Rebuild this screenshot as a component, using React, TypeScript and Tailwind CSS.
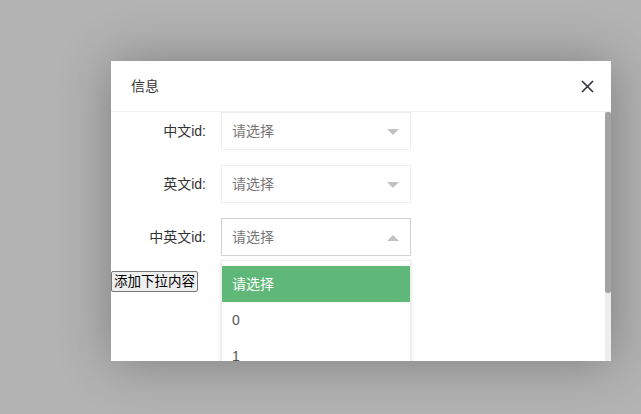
import React from "react";

const FONT = {
  fontFamily: '"Helvetica Neue", Helvetica, "Liberation Sans", "Noto Sans CJK SC", sans-serif',
};

function Caret({ up }: { up?: boolean }) {
  return (
    <svg width="12" height="6" viewBox="0 0 12 6" className="absolute right-[11px] top-[16px]">
      {up ? <polygon points="0,6 12,6 6,0" fill="#c2c2c2" /> : <polygon points="0,0 12,0 6,6" fill="#c2c2c2" />}
    </svg>
  );
}

function SelectRow({
  label,
  open,
  options,
}: {
  label: string;
  open?: boolean;
  options?: string[];
}) {
  return (
    <div className="flex mb-[15px]">
      <label className="w-[110px] pr-[15px] text-right leading-[38px] text-[14px] text-[#333]">
        {label}
      </label>
      <div className="relative w-[190px]">
        <div
          className={`relative h-[38px] border bg-white pl-[10px] leading-[36px] text-[14px] text-[#777] ${
            open ? "border-[#d2d2d2]" : "border-[#eee]"
          }`}
        >
          请选择
          <Caret up={open} />
        </div>
        {open && options && (
          <div className="absolute left-0 right-0 top-[42px] z-10 border border-[#eee] bg-white py-[5px] shadow-[0_2px_4px_rgba(0,0,0,0.12)]">
            {options.map((o, i) => (
              <div
                key={o}
                className={`h-[36px] px-[10px] leading-[36px] text-[14px] ${
                  i === 0 ? "bg-[#5fb878] text-white" : "text-[#555]"
                }`}
              >
                {o}
              </div>
            ))}
          </div>
        )}
      </div>
    </div>
  );
}

export default function App() {
  return (
    <div className="h-[414px] w-[641px] overflow-hidden bg-[#b3b3b3] pl-[111px] pt-[61px]" style={FONT}>
      <div className="flex h-[300px] w-[500px] flex-col bg-white shadow-[1px_1px_50px_rgba(0,0,0,0.3)]">
        {/* header */}
        <div className="flex h-[51px] shrink-0 items-center justify-between border-b border-[#f0f0f0] pl-[20px] pr-[17px]">
          <span className="text-[14px] text-[#333]">信息</span>
          <svg width="13" height="13" viewBox="0 0 13 13">
            <path d="M1 1 L12 12 M12 1 L1 12" stroke="#2f2f3a" strokeWidth="1.6" />
          </svg>
        </div>

        {/* body */}
        <div className="flex min-h-0 flex-1">
          <div className="flex-1 overflow-hidden">
            <SelectRow label="中文id:" />
            <SelectRow label="英文id:" />
            <SelectRow label="中英文id:" open options={["请选择", "0", "1"]} />
            <button className="mt-[2px] block h-[21px] rounded-[2px] border border-[#767676] bg-[#efefef] px-[2px] text-[13.5px] leading-[19px] text-black">
              添加下拉内容
            </button>
          </div>
          {/* scrollbar */}
          <div className="flex w-[6px] flex-col bg-[#eee]">
            <div className="h-[181px] rounded-[2px] bg-[#a3a3a3]" />
          </div>
        </div>
      </div>
    </div>
  );
}
